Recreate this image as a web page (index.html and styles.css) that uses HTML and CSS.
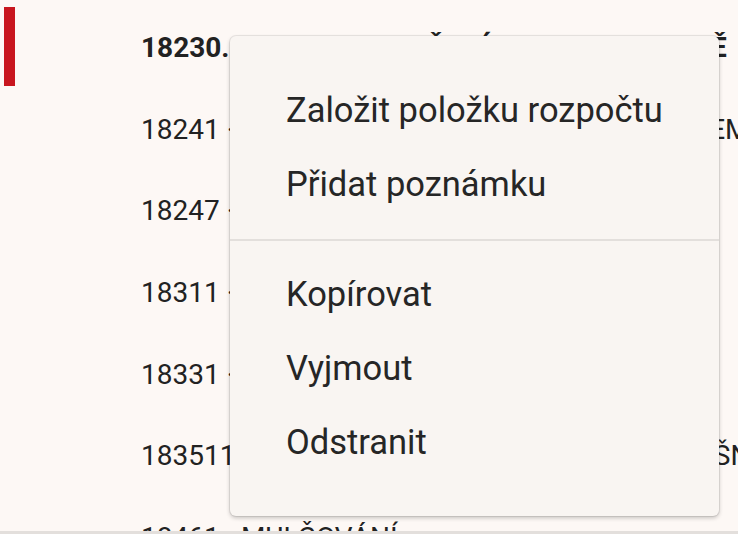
FILE: index.html
```html
<!DOCTYPE html>
<html lang="cs">
<head>
<meta charset="utf-8">
<title>Rozpočet</title>
<link rel="stylesheet" href="styles.css">
</head>
<body>
<div class="viewport">
  <ul class="rows">
    <li class="row active"><span class="marker"></span><span class="text">18230.01 · ROZPROSTŘENÍ ORNICE V ROVINĚ</span></li>
    <li class="row"><span class="marker"></span><span class="text">18241 · ZALOŽENÍ LUČNÍHO TRÁVNÍKU OSEVEM</span></li>
    <li class="row"><span class="marker"></span><span class="text">18247 · OŠETŘOVÁNÍ TRÁVNÍKU</span></li>
    <li class="row"><span class="marker"></span><span class="text">18311 · ZALOŽENÍ ZÁHONU</span></li>
    <li class="row"><span class="marker"></span><span class="text">18331 · VÝSADBA KEŘŮ</span></li>
    <li class="row"><span class="marker"></span><span class="text">183511 · MECHANICKÉ ODPLEVELOVÁNÍ PLOŠNÉ</span></li>
    <li class="row"><span class="marker"></span><span class="text">18461 · MULČOVÁNÍ</span></li>
  </ul>
</div>
<div class="menu" role="menu">
  <div class="group">
    <div class="item" role="menuitem">Založit položku rozpočtu</div>
    <div class="item" role="menuitem">Přidat poznámku</div>
  </div>
  <div class="divider"></div>
  <div class="group group-edit">
    <div class="item" role="menuitem">Kopírovat</div>
    <div class="item" role="menuitem">Vyjmout</div>
    <div class="item" role="menuitem">Odstranit</div>
  </div>
</div>
</body>
</html>
```
FILE: styles.css
```css
html, body {
  margin: 0;
  padding: 0;
}
body {
  position: relative;
  width: 738px;
  height: 534px;
  overflow: hidden;
  background: #fdf8f5;
  font-family: Roboto, "Noto Sans", sans-serif;
  color: #222;
}
.viewport {
  height: 531px;
  overflow: hidden;
  border-bottom: 3px solid #e3dfdc;
}
.rows {
  list-style: none;
  margin: 0;
  padding: 7px 0 0 0;
}
.row {
  display: flex;
  align-items: center;
  height: 81.6px;
  font-size: 28px;
  white-space: nowrap;
}
.marker {
  flex: none;
  align-self: flex-start;
  width: 11px;
  height: 79px;
  margin-left: 4px;
}
.row.active .marker {
  background: #c8161e;
}
.row.active .text {
  font-weight: 700;
}
.text {
  margin-left: 126px;
}
.menu {
  position: absolute;
  left: 230px;
  top: 36px;
  width: 489px;
  box-sizing: border-box;
  padding: 19px 0;
  background: #f9f5f2;
  border-radius: 6px;
  box-shadow: 0 0 0 1px rgba(0,0,0,0.07), 0 2px 4px rgba(0,0,0,0.22);
}
.group {
  padding: 18px 0;
}
.group-edit {
  padding-top: 16px;
}
.item {
  height: 74px;
  display: flex;
  align-items: center;
  padding-left: 56px;
  font-size: 34.5px;
  color: #262626;
}
.divider {
  height: 2px;
  background: #e3dfdc;
}
```
